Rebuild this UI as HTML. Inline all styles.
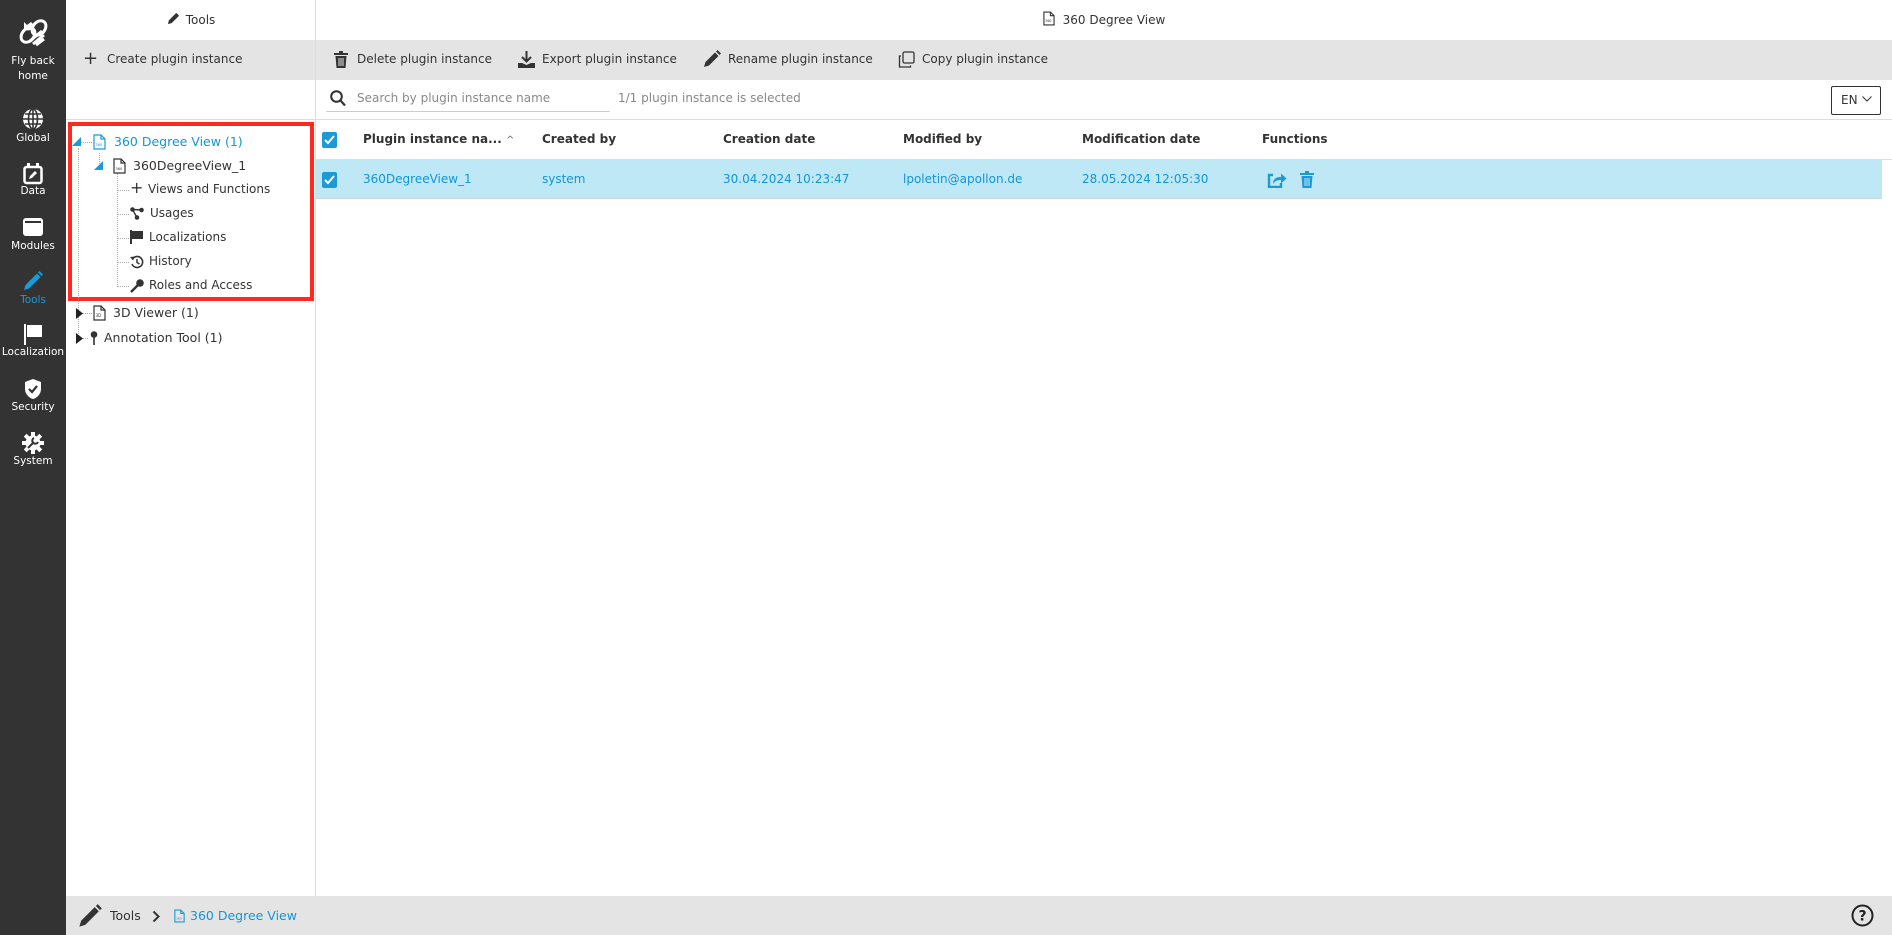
<!DOCTYPE html>
<html><head><meta charset="utf-8">
<style>
*{box-sizing:border-box;margin:0;padding:0}
body{width:1892px;height:935px;overflow:hidden;font-family:"DejaVu Sans","Liberation Sans",sans-serif;font-size:12px;color:#333;background:#fff;position:relative}
.abs{position:absolute}
#side{left:0;top:0;width:66px;height:935px;background:#333}
.si{position:absolute;left:0;width:66px;text-align:center;color:#fff;font-size:10.5px;font-weight:normal}
.si svg{display:block;margin:0 auto}
.t{position:absolute;white-space:nowrap}
.blue{color:#1196d6}
.dot{position:absolute;border-color:#aaa;border-style:dotted;border-width:0}
</style></head><body>
<div id="side" class="abs">
 <div class="si" style="top:14px">
  <svg width="38" height="38" viewBox="0 0 38 38" fill="none" stroke="#fff" stroke-width="3"><path d="M10 8 l3 3 l4-3 l3 3 l-2 4 a6 6 0 0 1-8 0z" fill="#fff" stroke="none"/><ellipse cx="14" cy="21" rx="6" ry="8" transform="rotate(40 14 21)"/><ellipse cx="25" cy="14" rx="6" ry="8" transform="rotate(40 25 14)"/><path d="M16 27 l12 -10 M19 30 l11-9 M22 31 l8-6"/></svg>
  <div style="margin-top:2px;line-height:15px">Fly back<br>home</div>
 </div>
 <div class="si" style="top:108px"><svg width="22" height="22" viewBox="0 0 22 22"><circle cx="11" cy="11" r="10" fill="#fff"/><path d="M1 11h20M11 1v20M3 6h16M3 16h16" stroke="#333" stroke-width="1.6" fill="none"/><ellipse cx="11" cy="11" rx="4.5" ry="10" stroke="#333" stroke-width="1.6" fill="none"/></svg><div style="margin-top:2px">Global</div></div>
 <div class="si" style="top:163px"><svg width="20" height="22" viewBox="0 0 20 22"><rect x="1.5" y="4" width="17" height="16" rx="2" fill="none" stroke="#fff" stroke-width="2.5"/><rect x="4" y="0" width="3" height="5" fill="#fff"/><rect x="13" y="0" width="3" height="5" fill="#fff"/><path d="M6 16l1-3 5-5 2 2-5 5z" fill="#fff"/></svg><div style="margin-top:0px">Data</div></div>
 <div class="si" style="top:217px"><svg width="22" height="20" viewBox="0 0 22 20"><rect x="1" y="1" width="20" height="18" rx="3" fill="#fff"/><rect x="3" y="4" width="16" height="2" fill="#333"/></svg><div style="margin-top:3px">Modules</div></div>
 <div class="si" style="top:270px;color:#1a9bd7"><svg width="22" height="22" viewBox="0 0 22 22"><path d="M2 20l1.5-5L15 3.5l3.5 3.5L7 18.5z" fill="#1a9bd7"/><path d="M16 2.5l1.5-1.5 3.5 3.5-1.5 1.5z" fill="#1a9bd7"/></svg><div style="margin-top:2px">Tools</div></div>
 <div class="si" style="top:323px"><svg width="22" height="22" viewBox="0 0 22 22"><rect x="2" y="1" width="2" height="21" fill="#fff"/><path d="M5 2h15v12H5z" fill="#fff"/></svg><div style="margin-top:1px">Localization</div></div>
 <div class="si" style="top:378px"><svg width="20" height="22" viewBox="0 0 20 22"><path d="M10 1l8 3v7c0 5-4 9-8 10-4-1-8-5-8-10V4z" fill="#fff"/><path d="M6 11l3 3 5-6" stroke="#333" stroke-width="2.2" fill="none"/></svg><div style="margin-top:1px">Security</div></div>
 <div class="si" style="top:432px"><svg width="22" height="22" viewBox="0 0 22 22"><circle cx="11" cy="11" r="7.5" fill="#fff"/><g fill="#fff"><rect x="9" y="0" width="4" height="5"/><rect x="9" y="17" width="4" height="5"/><rect x="0" y="9" width="5" height="4"/><rect x="17" y="9" width="5" height="4"/><rect x="9" y="0" width="4" height="5" transform="rotate(45 11 11)"/><rect x="9" y="17" width="4" height="5" transform="rotate(45 11 11)"/><rect x="0" y="9" width="5" height="4" transform="rotate(45 11 11)"/><rect x="17" y="9" width="5" height="4" transform="rotate(45 11 11)"/></g><path d="M6 16l6-6M12 6a3 3 0 1 0 4 4" stroke="#333" stroke-width="2" fill="none"/></svg><div style="margin-top:1px">System</div></div>
</div>

<div class="abs" style="left:66px;top:0;width:250px;height:40px;text-align:center;line-height:40px"><svg width="13" height="13" viewBox="0 0 14 14" style="vertical-align:-1px;margin-right:6px"><path d="M1 13l1-4 8-8 3 3-8 8z" fill="#333"/></svg>Tools</div>
<div class="abs" style="left:66px;top:40px;width:250px;height:40px;background:#e4e4e4"></div>
<div class="t" style="left:83px;top:50px;font-size:18px;line-height:18px">+</div>
<div class="t" style="left:107px;top:52px">Create plugin instance</div>
<div class="abs" style="left:66px;top:119px;width:250px;height:1px;background:#ddd"></div>
<div class="abs" style="left:315px;top:0;width:1px;height:896px;background:#ddd"></div>

<div class="abs" style="left:68px;top:122px;width:246px;height:179px;border:4px solid #ff2a1f"></div>
<div class="dot" style="left:78px;top:148px;height:190px;border-left-width:1px"></div>
<div class="dot" style="left:80px;top:142px;width:12px;border-top-width:1px"></div>
<div class="dot" style="left:99px;top:153px;height:13px;border-left-width:1px"></div>
<div class="dot" style="left:117px;top:173px;height:114px;border-left-width:1px"></div>
<div class="dot" style="left:117px;top:190px;width:12px;border-top-width:1px"></div>
<div class="dot" style="left:117px;top:214px;width:12px;border-top-width:1px"></div>
<div class="dot" style="left:117px;top:238px;width:12px;border-top-width:1px"></div>
<div class="dot" style="left:117px;top:262px;width:12px;border-top-width:1px"></div>
<div class="dot" style="left:117px;top:286px;width:12px;border-top-width:1px"></div>
<div class="dot" style="left:82px;top:313px;width:10px;border-top-width:1px"></div>
<div class="dot" style="left:82px;top:338px;width:6px;border-top-width:1px"></div>

<svg class="abs" style="left:72px;top:137px" width="9" height="9"><path d="M9 0v9H0z" fill="#1a9bd7"/></svg>
<svg class="abs" style="left:93px;top:134px" width="13" height="16" viewBox="0 0 13 16"><path d="M1 1h7l4 4v10H1z M8 1v4h4" fill="none" stroke="#1a9bd7" stroke-width="1.2"/><text x="2.5" y="12" font-size="3.5" fill="#1a9bd7">360</text></svg>
<div class="t blue" style="left:114px;top:134px;font-size:12.5px">360 Degree View (1)</div>
<svg class="abs" style="left:94px;top:161px" width="9" height="9"><path d="M9 0v9H0z" fill="#1a9bd7"/></svg>
<svg class="abs" style="left:113px;top:158px" width="13" height="16" viewBox="0 0 13 16"><path d="M1 1h7l4 4v10H1z M8 1v4h4" fill="none" stroke="#333" stroke-width="1.2"/><text x="2.5" y="12" font-size="3.5" fill="#333">360</text></svg>
<div class="t" style="left:133px;top:158px;font-size:12.5px">360DegreeView_1</div>
<div class="t" style="left:130px;top:180px;font-size:16px;line-height:16px">+</div>
<div class="t" style="left:148px;top:182px">Views and Functions</div>
<svg class="abs" style="left:130px;top:207px" width="14" height="13" viewBox="0 0 14 13"><circle cx="2.5" cy="2.5" r="2.3" fill="#333"/><circle cx="11.5" cy="3" r="2.3" fill="#333"/><circle cx="7" cy="10.5" r="2.3" fill="#333"/><path d="M2.5 2.5L11.5 3M2.5 2.5L7 10.5" stroke="#333" stroke-width="1.4"/></svg>
<div class="t" style="left:150px;top:206px">Usages</div>
<svg class="abs" style="left:130px;top:230px" width="14" height="14"><rect x="0" y="0" width="2" height="14" fill="#333"/><path d="M2 1h11v8H2z" fill="#333"/></svg>
<div class="t" style="left:149px;top:230px">Localizations</div>
<svg class="abs" style="left:130px;top:255px" width="14" height="14" viewBox="0 0 14 14"><path d="M2.5 4A5.5 5.5 0 1 1 2 9" fill="none" stroke="#333" stroke-width="1.6"/><path d="M0 2l3 3.5 2-4z" fill="#333"/><path d="M7 4v3.5l2.5 1.5" fill="none" stroke="#333" stroke-width="1.5"/></svg>
<div class="t" style="left:149px;top:254px">History</div>
<svg class="abs" style="left:130px;top:279px" width="14" height="14" viewBox="0 0 14 14"><circle cx="10" cy="4" r="3.8" fill="#333"/><path d="M8 6L1 13" stroke="#333" stroke-width="2.4"/></svg>
<div class="t" style="left:149px;top:278px">Roles and Access</div>
<svg class="abs" style="left:76px;top:308px" width="7" height="11"><path d="M0 0l7 5.5L0 11z" fill="#222"/></svg>
<svg class="abs" style="left:93px;top:305px" width="13" height="16" viewBox="0 0 13 16"><path d="M1 1h7l4 4v10H1z M8 1v4h4" fill="none" stroke="#333" stroke-width="1.2"/><text x="2.5" y="12" font-size="4" fill="#333">3D</text></svg>
<div class="t" style="left:113px;top:305px;font-size:12.5px">3D Viewer (1)</div>
<svg class="abs" style="left:76px;top:333px" width="7" height="11"><path d="M0 0l7 5.5L0 11z" fill="#222"/></svg>
<svg class="abs" style="left:90px;top:331px" width="8" height="14"><circle cx="4" cy="3.5" r="3.3" fill="#333"/><rect x="3.2" y="5" width="1.6" height="9" fill="#333"/></svg>
<div class="t" style="left:104px;top:330px;font-size:12.5px">Annotation Tool (1)</div>

<div class="abs" style="left:316px;top:0;width:1576px;height:40px;text-align:center;line-height:40px"><svg width="12" height="15" viewBox="0 0 13 16" style="vertical-align:-2px;margin-right:8px"><path d="M1 1h7l4 4v10H1z M8 1v4h4" fill="none" stroke="#333" stroke-width="1.2"/><text x="2.5" y="12" font-size="3.5" fill="#333">360</text></svg>360 Degree View</div>
<div class="abs" style="left:316px;top:40px;width:1576px;height:40px;background:#e4e4e4"></div>
<svg class="abs" style="left:334px;top:51px" width="14" height="17" viewBox="0 0 14 17"><rect x="0" y="2" width="14" height="2" fill="#333"/><rect x="5" y="0" width="4" height="2" fill="#333"/><path d="M1.5 5h11l-1 12h-9z" fill="#333"/><path d="M5 7v8M7 7v8M9 7v8" stroke="#e4e4e4" stroke-width="1"/></svg>
<div class="t" style="left:357px;top:52px">Delete plugin instance</div>
<svg class="abs" style="left:518px;top:51px" width="17" height="17" viewBox="0 0 17 17"><path d="M8.5 0v10M4 6l4.5 4.5L13 6" stroke="#333" stroke-width="2" fill="none"/><path d="M0 12h4l4.5 2 4.5-2h4v5H0z" fill="#333"/></svg>
<div class="t" style="left:542px;top:52px">Export plugin instance</div>
<svg class="abs" style="left:703px;top:50px" width="18" height="18" viewBox="0 0 18 18"><path d="M1 17l1.5-5L12 2.5l3.5 3.5L6 15.5z" fill="#333"/><path d="M13 1.5l1.5-1.5 3.5 3.5-1.5 1.5z" fill="#333"/></svg>
<div class="t" style="left:728px;top:52px">Rename plugin instance</div>
<svg class="abs" style="left:898px;top:51px" width="17" height="17" viewBox="0 0 17 17"><rect x="5" y="1" width="11" height="11" rx="1.5" fill="none" stroke="#333" stroke-width="1.3"/><path d="M3 5H1.5v11h11v-1.5" fill="none" stroke="#333" stroke-width="1.3"/></svg>
<div class="t" style="left:922px;top:52px">Copy plugin instance</div>

<svg class="abs" style="left:330px;top:90px" width="16" height="17" viewBox="0 0 16 17"><circle cx="6.5" cy="6.5" r="5.3" fill="none" stroke="#333" stroke-width="2"/><path d="M10.5 10.5l4.5 5" stroke="#333" stroke-width="2.2"/></svg>
<div class="t" style="left:357px;top:91px;color:#888">Search by plugin instance name</div>
<div class="abs" style="left:326px;top:111px;width:284px;height:1px;background:#ccc"></div>
<div class="t" style="left:618px;top:91px;color:#888">1/1 plugin instance is selected</div>
<div class="abs" style="left:1831px;top:86px;width:50px;height:29px;border:1px solid #333;border-radius:2px;font-size:12px;line-height:27px;padding-left:9px">EN <svg width="10" height="6" style="vertical-align:2px;margin-left:1px"><path d="M0.5 0.5l4.5 4.5 4.5-4.5" fill="none" stroke="#333"/></svg></div>
<div class="abs" style="left:316px;top:119px;width:1576px;height:1px;background:#ddd"></div>

<svg class="abs" style="left:322px;top:132px" width="15" height="16"><rect width="15" height="16" rx="2" fill="#1a9bd7"/><path d="M3 8l3 3 6-7" stroke="#fff" stroke-width="2" fill="none"/></svg>
<div class="t" style="left:363px;top:132px;font-weight:bold">Plugin instance na... <span style="font-weight:normal;font-size:10px;color:#666">^</span></div>
<div class="t" style="left:542px;top:132px;font-weight:bold">Created by</div>
<div class="t" style="left:723px;top:132px;font-weight:bold">Creation date</div>
<div class="t" style="left:903px;top:132px;font-weight:bold">Modified by</div>
<div class="t" style="left:1082px;top:132px;font-weight:bold">Modification date</div>
<div class="t" style="left:1262px;top:132px;font-weight:bold">Functions</div>
<div class="abs" style="left:316px;top:159px;width:1576px;height:1px;background:#ddd"></div>
<div class="abs" style="left:316px;top:160px;width:1566px;height:39px;background:#bfe8f7;border-bottom:1px solid #c8d8de"></div>
<svg class="abs" style="left:322px;top:172px" width="15" height="16"><rect width="15" height="16" rx="2" fill="#1a9bd7"/><path d="M3 8l3 3 6-7" stroke="#fff" stroke-width="2" fill="none"/></svg>
<div class="t blue" style="left:363px;top:172px">360DegreeView_1</div>
<div class="t blue" style="left:542px;top:172px">system</div>
<div class="t blue" style="left:723px;top:172px">30.04.2024 10:23:47</div>
<div class="t blue" style="left:903px;top:172px">lpoletin@apollon.de</div>
<div class="t blue" style="left:1082px;top:172px">28.05.2024 12:05:30</div>
<svg class="abs" style="left:1267px;top:171px" width="20" height="17" viewBox="0 0 20 17"><path d="M6 4H2v12h12v-4" fill="none" stroke="#1a9bd7" stroke-width="2.4"/><path d="M6 13c0-5 3-7 8-7V2.5L19.5 7.5 14 12.5V9c-4 0-6 1-8 4z" fill="#1a9bd7"/></svg>
<svg class="abs" style="left:1300px;top:171px" width="14" height="17" viewBox="0 0 14 17"><rect x="0" y="2" width="14" height="2" fill="#1a9bd7"/><rect x="5" y="0" width="4" height="2" fill="#1a9bd7"/><path d="M1.5 5h11l-1 12h-9z" fill="#1a9bd7"/><path d="M5 7v8M7 7v8M9 7v8" stroke="#bfe8f7" stroke-width="1"/></svg>

<div class="abs" style="left:66px;top:896px;width:1826px;height:39px;background:#e4e4e4"></div>
<svg class="abs" style="left:77px;top:903px" width="26" height="26" viewBox="0 0 22 22"><path d="M2 20l1.5-5L15 3.5l3.5 3.5L7 18.5z" fill="#333"/><path d="M16 2.5l1.5-1.5 3.5 3.5-1.5 1.5z" fill="#333"/></svg>
<div class="t" style="left:110px;top:908px;font-size:12.5px">Tools</div>
<svg class="abs" style="left:152px;top:910px" width="9" height="13"><path d="M1.5 1.5l5 5-5 5" fill="none" stroke="#333" stroke-width="2"/></svg>
<svg class="abs" style="left:174px;top:909px" width="11" height="14" viewBox="0 0 13 16"><path d="M1 1h7l4 4v10H1z M8 1v4h4" fill="none" stroke="#1a9bd7" stroke-width="1.3"/><text x="2.5" y="12" font-size="3.5" fill="#1a9bd7">360</text></svg>
<div class="t blue" style="left:190px;top:908px;font-size:12.5px">360 Degree View</div>
<svg class="abs" style="left:1851px;top:904px" width="23" height="23" viewBox="0 0 23 23"><circle cx="11.5" cy="11.5" r="10" fill="none" stroke="#222" stroke-width="2"/><text x="11.5" y="16.5" text-anchor="middle" font-family="DejaVu Sans" font-weight="bold" font-size="14" fill="#222">?</text></svg>
</body></html>
